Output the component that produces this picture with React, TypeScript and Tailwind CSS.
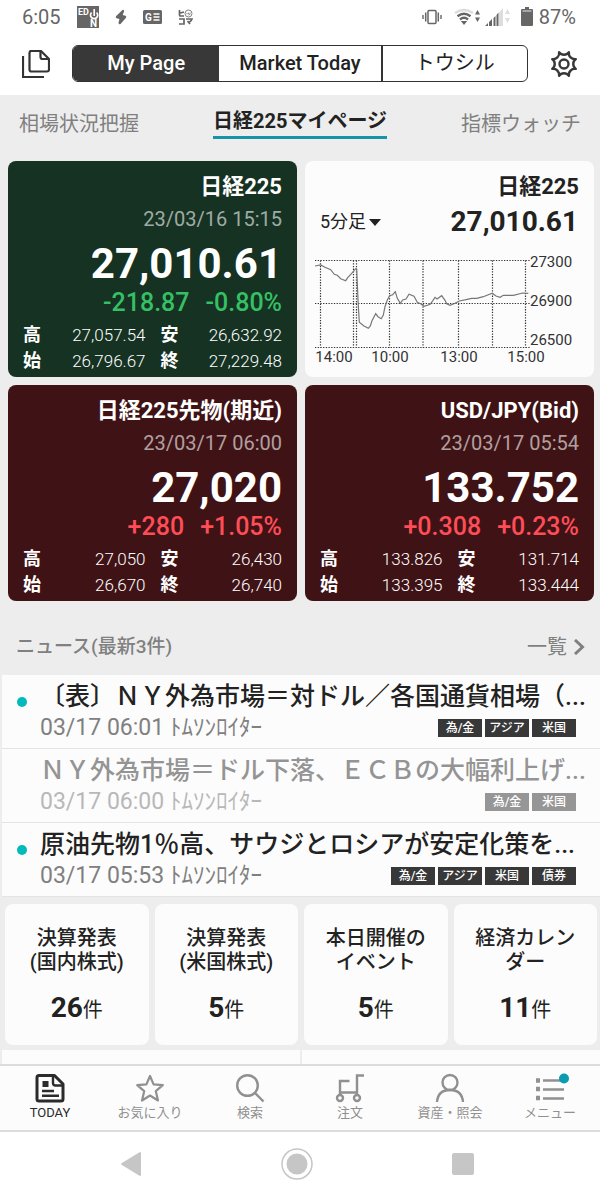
import type { ReactNode } from 'react';

interface Quote {
    title: string;
    time: string;
    price: string;
    change: string;
    percent: string;
    high: string;
    low: string;
    open: string;
    close: string;
    up: boolean;
}

interface NewsItem {
    title: string;
    time: string;
    tags: string[];
    read: boolean;
}

interface EventTile {
    lines: string[];
    count: number;
}

const nikkei: Quote = {
    title: '日経225',
    time: '23/03/16 15:15',
    price: '27,010.61',
    change: '-218.87',
    percent: '-0.80%',
    high: '27,057.54',
    low: '26,632.92',
    open: '26,796.67',
    close: '27,229.48',
    up: false,
};

const futures: Quote = {
    title: '日経225先物(期近)',
    time: '23/03/17 06:00',
    price: '27,020',
    change: '+280',
    percent: '+1.05%',
    high: '27,050',
    low: '26,430',
    open: '26,670',
    close: '26,740',
    up: true,
};

const usdjpy: Quote = {
    title: 'USD/JPY(Bid)',
    time: '23/03/17 05:54',
    price: '133.752',
    change: '+0.308',
    percent: '+0.23%',
    high: '133.826',
    low: '131.714',
    open: '133.395',
    close: '133.444',
    up: true,
};

const news: NewsItem[] = [
    { title: '〔表〕ＮＹ外為市場＝対ドル／各国通貨相場（...', time: '03/17 06:01', tags: ['為/金', 'アジア', '米国'], read: false },
    { title: 'ＮＹ外為市場＝ドル下落、ＥＣＢの大幅利上げ...', time: '03/17 06:00', tags: ['為/金', '米国'], read: true },
    { title: '原油先物1％高、サウジとロシアが安定化策を...', time: '03/17 05:53', tags: ['為/金', 'アジア', '米国', '債券'], read: false },
];

const tiles: EventTile[] = [
    { lines: ['決算発表', '(国内株式)'], count: 26 },
    { lines: ['決算発表', '(米国株式)'], count: 5 },
    { lines: ['本日開催の', 'イベント'], count: 5 },
    { lines: ['経済カレン', 'ダー'], count: 11 },
];

function StatusBar() {
    return (
        <div className="flex items-center justify-between py-[5px] pl-[22px] pr-6 text-xl leading-6 text-[#666]">
            <div className="flex items-center">
                <span>6:05</span>
                <svg className="ml-4 h-[22px] w-[22px]" viewBox="0 0 22 22">
                    <rect width="22" height="22" fill="#666" />
                    <text x="1" y="9" fontSize="9" fontWeight="700" fill="#fff">ED</text>
                    <path d="M14.600 6.500a3.600 3.600 0 1 0 5 0M17.200 3v7" fill="none" stroke="#fff" strokeWidth="1.700" />
                    <text x="13" y="21" fontSize="10" fontWeight="700" fill="#fff">N</text>
                </svg>
                <svg className="ml-4 h-4 w-3" viewBox="0 0 12 16" fill="#666">
                    <path d="M7.500 1 1.200 7q-1.200 1.500.3 2.200l3 .8-1 3.500q0 2.500 2 1.500L10.800 9q1.200-1.500-.3-2.200L7.700 6l1.300-3.500Q9.300.2 7.500 1Z" />
                </svg>
                <svg className="ml-4 h-[14px] w-[19px]" viewBox="0 0 19 14">
                    <rect width="19" height="14" rx="1.500" fill="#666" />
                    <text x="2" y="11" fontSize="10" fontWeight="700" fill="#fff">G</text>
                    <path d="M10.500 4h6M10.500 7h6M10.500 10h6" stroke="#fff" strokeWidth="1.400" />
                </svg>
                <svg className="ml-4 h-4 w-[15px]" viewBox="0 0 15 16">
                    <g fill="none" stroke="#666" strokeWidth="1.700">
                        <path d="M1.500 1v5q0 1 1 1H6M1.500 4.200 6 3M1 10h5v5H1M8 10h6q-.5 2-3 3.500M9.500 12l2.500 3" />
                        <circle cx="10.500" cy="4.500" r="3.500" strokeWidth=".8" />
                        <path d="M9 4v1.200M10.500 3.700v1.200M12.300 3.700q0 2-2 2.500" strokeWidth=".8" />
                    </g>
                </svg>
            </div>
            <div className="flex items-center">
                <svg className="h-4 w-5" viewBox="0 0 20 16" fill="none" stroke="#666">
                    <rect x="6" y="1.500" width="8" height="13" rx="1" strokeWidth="1.500" />
                    <path d="M3.700 3.500v9M16.300 3.500v9" strokeWidth="1.500" />
                    <path d="M1 6v4M19 6v4" strokeWidth="1.400" />
                </svg>
                <svg className="ml-3 h-[18px] w-[26px]" viewBox="0 0 26 18" fill="none" strokeWidth="2.400">
                    <path d="M1 5q9-6 18 0" stroke="#ddd" />
                    <path d="M3.500 8.300q6.500-5 13 0M6 11.500q4-3.300 8 0" stroke="#666" />
                    <path d="M6.800 13h6.400L10 17ZM21 6.500h5L23.500 2ZM21 9.500h5L23.500 14Z" fill="#666" />
                </svg>
                <svg className="ml-[5px] h-[18px] w-[26px]" viewBox="0 0 26 18">
                    <path d="M14 4.500 18 0v18h-4Z" fill="#ddd" />
                    <path d="M0 18l3-3v3ZM4 14l3-3v7H4ZM8.500 10l2-2v10h-2ZM11.500 7l2-2.500V18h-2Z" fill="#666" />
                    <path d="M20 6h5l-2.500-5ZM20 10h5l-2.500 5Z" fill="#ddd" />
                </svg>
                <svg className="ml-[10px] h-5 w-3" viewBox="0 0 12 20">
                    <path d="M4 0h4v2h3q1 0 1 1v15q0 1-1 1H1q-1 0-1-1V3q0-1 1-1h3Z" fill="#666" />
                    <path d="M1.500 4h9" stroke="#bbb" strokeWidth="1.500" />
                </svg>
                <span className="ml-[6px]">87%</span>
            </div>
        </div>
    );
}

function Header() {
    return (
        <header className="flex items-center gap-[22px] px-[22px] pb-[13px] pt-[11px]">
            <button type="button" aria-label="ページ一覧">
                <svg className="h-7 w-7" viewBox="0 0 28 28" fill="none" stroke="#333" strokeWidth="2.200" strokeLinejoin="round">
                    <path d="M8.500 1H19l8 8v10.500q0 2-2 2H9.500q-2 0-2-2V3q0-2 2-2Z" />
                    <path d="M18.500 1.500v5.500q0 2 2 2h6" />
                    <path d="M1 6v21h21" strokeLinejoin="miter" />
                </svg>
            </button>
            <div className="grid flex-1 grid-cols-[10fr_11fr_10fr] overflow-hidden rounded-md border border-[#333] text-xl font-medium leading-[35px] text-[#222]">
                <button type="button" className="bg-[#383838] text-white">My Page</button>
                <button type="button">Market Today</button>
                <button type="button" className="border-l-2 border-[#333] font-normal">トウシル</button>
            </div>
            <button type="button" aria-label="設定">
                <svg className="h-7 w-7" viewBox="0 0 28 28" fill="none" stroke="#383838" strokeWidth="2.400" strokeLinejoin="round">
                    <path d="M25.800 18.900A6 6 0 0 0 18.900 25.800A6 6 0 0 0 9.100 25.800A6 6 0 0 0 2.200 18.900A6 6 0 0 0 2.200 9.100A6 6 0 0 0 9.100 2.200A6 6 0 0 0 18.900 2.200A6 6 0 0 0 25.800 9.100A6 6 0 0 0 25.800 18.900Z" />
                    <circle cx="14" cy="14" r="4.500" />
                </svg>
            </button>
        </header>
    );
}

function PageTabs() {
    return (
        <nav className="flex items-end justify-between px-[19px] pb-[22px] pt-[11px] text-xl leading-[30px] text-[#808080]">
            <a href="#market">相場状況把握</a>
            <a href="#nikkei" className="border-b-[3px] border-[#1a93a6] font-bold leading-[30px] text-[#222]">日経225マイページ</a>
            <a href="#watch">指標ウォッチ</a>
        </nav>
    );
}

function QuoteCard({ quote }: { quote: Quote }) {
    const background = quote.up ? 'bg-[#3f1315]' : 'bg-[#153222]';
    const accent = quote.up ? 'text-[#ff4d58]' : 'text-[#36c065]';

    return (
        <section className={`rounded-lg px-[15px] pb-[3px] pt-[10px] text-right text-white ${background}`}>
            <h2 className="text-[22px] font-bold leading-8">{quote.title}</h2>
            <p className="text-xl leading-8 text-white/60">{quote.time}</p>
            <p className="mt-[5px] text-[42px] font-bold leading-[48px]">{quote.price}</p>
            <p className={`mt-0.5 flex justify-end gap-4 text-[25px] leading-[26px] font-medium ${accent}`}>
                <span>{quote.change}</span>
                <span>{quote.percent}</span>
            </p>
            <dl className="mt-1.5 grid grid-cols-[20px_1fr_34px_1fr] text-[17px] leading-[26px]">
                <dt className="text-left text-lg font-bold leading-[26px]">高</dt>
                <dd className="font-light">{quote.high}</dd>
                <dt className="text-center text-lg font-bold leading-[26px] pl-3.5">安</dt>
                <dd className="font-light">{quote.low}</dd>
                <dt className="text-left text-lg font-bold leading-[26px]">始</dt>
                <dd className="font-light">{quote.open}</dd>
                <dt className="text-center text-lg font-bold leading-[26px] pl-3.5">終</dt>
                <dd className="font-light">{quote.close}</dd>
            </dl>
        </section>
    );
}

function ChartCard() {
    return (
        <section className="rounded-lg bg-[#fcfcfc] pt-[10px] text-[#222]">
            <h2 className="px-[15px] text-right text-[22px] font-bold leading-8">日経225</h2>
            <div className="flex items-center justify-between pl-[15px] pr-4 leading-[38px]">
                <div className="flex items-center gap-0.5">
                    <select aria-label="足種" defaultValue="5" className="appearance-none bg-transparent text-lg">
                        <option value="5">5分足</option>
                    </select>
                    <svg className="h-[7px] w-3" viewBox="0 0 12 7" fill="#222">
                        <path d="M0 0h12L6 7Z" />
                    </svg>
                </div>
                <p className="text-[28px] font-bold">27,010.61</p>
            </div>
            <svg className="w-full" viewBox="0 0 289 136" fontSize="15" fill="#333">
                <g stroke="#333" strokeWidth="1.200" strokeDasharray="1.300 1.400">
                    <path d="M10 19.500H225M10 62.500H225M10 106.500H225" />
                    <path d="M15.500 19.500v87M48.500 19.500v87M51.500 19.500v87M84.500 19.500v87M118 19.500v87M153.500 19.500v87M187.500 19.500v87M220.500 19.500v87" />
                </g>
                <polyline
                    fill="none"
                    stroke="#777"
                    strokeWidth="1.200"
                    points="10,25 15.700,24 20,26.300 25.700,28.700 29.300,33.300 32.300,34.300 35.700,37.700 40.700,39.700 42.700,36.700 46.700,32.300 50.700,27.700 51.700,28.300 53,59 54.300,81.300 59,85 63.300,87.300 65.300,85 67,79.700 70.700,72.700 73,75.700 76.300,77.700 78.300,74 80,65.700 82.300,59 84.700,54.700 87.700,53.700 90.300,50.700 92.300,57.300 95.300,62.300 97.700,59 101,58 104,53.300 109,55.300 112.300,61.300 116,63 119,65.300 125.300,63.300 130,56.300 132,58 136.700,54.700 140,59.300 141.700,62.700 145,64.300 149,62.700 154.300,60 161,58.700 166.700,57.300 171.700,57.300 178.300,55.700 187.300,52.300 191,55 195,56.300 198.300,54.300 208.300,54.300 217.700,52 223.300,52.300"
                />
                <text x="225" y="26">27300</text>
                <text x="225" y="65">26900</text>
                <text x="225" y="104">26500</text>
                <g textAnchor="middle">
                    <text x="29" y="121">14:00</text>
                    <text x="85" y="121">10:00</text>
                    <text x="154" y="121">13:00</text>
                    <text x="221" y="121">15:00</text>
                </g>
            </svg>
        </section>
    );
}

function NewsRow({ item }: { item: NewsItem }) {
    return (
        <li className="flex gap-[13px] border-b border-[#e4e4e4] bg-[#fcfcfc] pb-[5px] pl-[15px] pr-6 pt-1.5">
            <span className={`mt-4 h-[10px] w-[10px] shrink-0 rounded-full ${item.read ? '' : 'bg-[#00babb]'}`} />
            <div className="min-w-0 flex-1">
                <a href="#news" className={`block whitespace-nowrap text-[25px] font-medium leading-8 ${item.read ? 'text-[#949494]' : 'text-[#222]'}`}>
                    {item.title}
                </a>
                <div className={`flex items-center justify-between ${item.read ? 'text-[#b8b8b8]' : 'text-[#808080]'}`}>
                    <p className="text-[23px] font-normal leading-[30px]">
                        {item.time} <span>ﾄﾑｿﾝﾛｲﾀｰ</span>
                    </p>
                    <ul className="flex gap-[3px]">
                        {item.tags.map((tag) => (
                            <li key={tag} className={`w-11 text-center text-xs font-medium leading-[18px] text-white ${item.read ? 'bg-[#969696]' : 'bg-[#383838]'}`}>
                                {tag}
                            </li>
                        ))}
                    </ul>
                </div>
            </div>
        </li>
    );
}

function NavItem({ label, active, children }: { label: string; active?: boolean; children: ReactNode }) {
    return (
        <a href="#nav" className={`flex flex-col items-center pb-[7px] pt-2 ${active ? 'text-[#2b2b2b]' : 'text-[#909090]'}`}>
            <svg className="h-7 w-[34px] overflow-visible" viewBox="-3 0 34 28" fill="none" stroke="currentColor" strokeWidth="2.400">
                {children}
            </svg>
            <span className="text-[13px] leading-[21px]">{label}</span>
        </a>
    );
}

function BottomNav() {
    return (
        <nav className="grid grid-cols-6 border-y-2 border-[#dcdcdc] bg-[#fcfcfc]">
            <NavItem label="TODAY" active>
                <path d="M3 1.500h15.500l8.500 8.500v15q0 2-2 2H3q-2 0-2-2V3.500q0-2 2-2Z" strokeWidth="3" strokeLinejoin="round" />
                <path d="M17 2v7q0 2.500 2.500 2.500H27" />
                <path d="M6.500 7h6v6h-6Z" fill="currentColor" stroke="none" />
                <path d="M6 17h12M6 21.700h17" />
            </NavItem>
            <NavItem label="お気に入り">
                <path d="M14 2l3.600 8.400 9.200.8-7 6 2.200 9.300-8-5-8 5 2.200-9.300-7-6 9.200-.8Z" strokeWidth="2.200" strokeLinejoin="round" />
            </NavItem>
            <NavItem label="検索">
                <circle cx="11.500" cy="11.500" r="10.300" />
                <path d="M19 19l8.500 8.500" />
            </NavItem>
            <NavItem label="注文">
                <circle cx="4" cy="24" r="3" />
                <circle cx="21" cy="24" r="3" />
                <path d="M4 21V7h9.500M4 18.500h17M21 21V1.500h7" />
            </NavItem>
            <NavItem label="資産・照会">
                <circle cx="14" cy="8.500" r="7.500" />
                <path d="M1 28q1-12 13-12t13 12" />
            </NavItem>
            <NavItem label="メニュー">
                <path d="M0 6.500h4M0 15h4M0 24h4" strokeWidth="4.500" />
                <path d="M7 6.500h21M7 15.500h21M7 24.500h21" />
                <circle cx="28" cy="4.500" r="5" fill="#0a9bb0" stroke="none" />
            </NavItem>
        </nav>
    );
}

function SystemNav() {
    return (
        <div className="flex items-center justify-center gap-[138px] bg-white pb-4 pr-1.5 pt-[15px]">
            <button type="button" aria-label="戻る">
                <svg className="h-[34px] w-[22px]" viewBox="0 0 22 34" fill="#c6c6c6" stroke="#c6c6c6" strokeWidth="2" strokeLinejoin="round">
                    <path d="M2 17 20 6v22Z" />
                </svg>
            </button>
            <button type="button" aria-label="ホーム">
                <svg className="h-[34px] w-[34px]" viewBox="0 0 34 34">
                    <circle cx="17" cy="17" r="15" fill="none" stroke="#c6c6c6" strokeWidth="1.500" />
                    <circle cx="17" cy="17" r="10.500" fill="#c6c6c6" />
                </svg>
            </button>
            <button type="button" aria-label="履歴">
                <svg className="h-[34px] w-[22px]" viewBox="0 0 22 34">
                    <rect y="6" width="22" height="22" rx="2" fill="#c6c6c6" />
                </svg>
            </button>
        </div>
    );
}

export default function App() {
    return (
        <div className="min-h-screen bg-white font-['Roboto','Noto_Sans_CJK_JP',sans-serif]">
            <StatusBar />
            <Header />
            <main className="bg-[#ededed]">
                <PageTabs />
                <div className="grid grid-cols-2 gap-2 pl-2 pr-1.5">
                    <QuoteCard quote={nikkei} />
                    <ChartCard />
                    <QuoteCard quote={futures} />
                    <QuoteCard quote={usdjpy} />
                </div>
                <div className="flex items-center justify-between pb-[10px] pl-4 pr-[15px] pt-7 leading-9 text-[#808080]">
                    <h2 className="text-[19px] font-medium">ニュース(最新3件)</h2>
                    <a href="#list" className="flex items-center gap-1.5 text-xl leading-9">
                        一覧
                        <svg className="h-4 w-3" viewBox="0 0 12 16" fill="none" stroke="currentColor" strokeWidth="3">
                            <path d="M2 1l7.500 7L2 15" />
                        </svg>
                    </a>
                </div>
                <ul className="pl-0.5">
                    {news.map((item) => (
                        <NewsRow key={item.time} item={item} />
                    ))}
                </ul>
                <div className="grid grid-cols-4 gap-1.5 pl-[5px] pr-[3px] pt-[7px]">
                    {tiles.map((tile) => (
                        <section key={tile.lines.join('')} className="rounded-lg bg-[#fcfcfc] pb-[15px] pt-[22px] text-center text-xl text-[#222]">
                            <h3 className="font-medium leading-6">
                                {tile.lines[0]}
                                <br />
                                {tile.lines[1]}
                            </h3>
                            <p className="mt-3.5 leading-10">
                                <span className="text-[28px] font-bold">{tile.count}</span>件
                            </p>
                        </section>
                    ))}
                </div>
                <div className="mt-[5px] grid grid-cols-2 gap-0.5 pl-0.5">
                    <div className="h-3.5 bg-[#fcfcfc]" />
                    <div className="h-3.5 bg-[#fcfcfc]" />
                </div>
            </main>
            <BottomNav />
            <SystemNav />
        </div>
    );
}
